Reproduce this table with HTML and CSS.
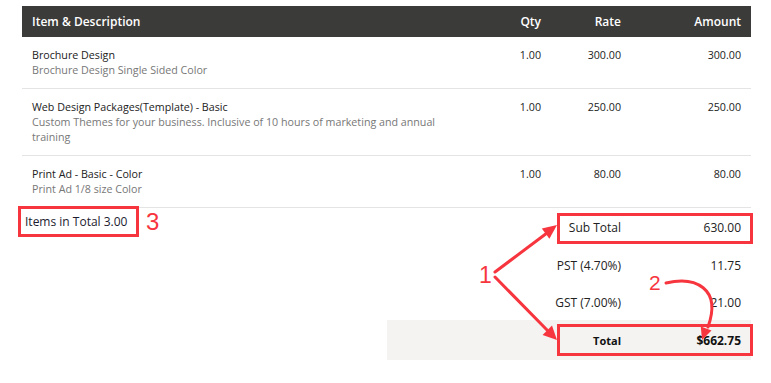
FILE: index.html
```html
<!DOCTYPE html>
<html lang="en">
<head>
<meta charset="utf-8">
<title>Invoice items</title>
<link rel="stylesheet" href="styles.css">
</head>
<body>
<div class="invoice">
  <div class="items">
    <div class="row head">
      <div class="cell item">Item &amp; Description</div>
      <div class="cell num">Qty</div>
      <div class="cell num">Rate</div>
      <div class="cell num amt">Amount</div>
    </div>
    <div class="row line">
      <div class="cell item">
        <div class="title">Brochure Design</div>
        <div class="desc">Brochure Design Single Sided Color</div>
      </div>
      <div class="cell num">1.00</div>
      <div class="cell num">300.00</div>
      <div class="cell num amt">300.00</div>
    </div>
    <div class="row line">
      <div class="cell item">
        <div class="title">Web Design Packages(Template) - Basic</div>
        <div class="desc">Custom Themes for your business. Inclusive of 10 hours of marketing and annual training</div>
      </div>
      <div class="cell num">1.00</div>
      <div class="cell num">250.00</div>
      <div class="cell num amt">250.00</div>
    </div>
    <div class="row line">
      <div class="cell item">
        <div class="title">Print Ad - Basic - Color</div>
        <div class="desc">Print Ad 1/8 size Color</div>
      </div>
      <div class="cell num">1.00</div>
      <div class="cell num">80.00</div>
      <div class="cell num amt">80.00</div>
    </div>
  </div>
  <div class="summary">
    <div class="count">Items in Total 3.00</div>
    <div class="totals">
      <div class="trow sub"><span class="label">Sub Total</span><span class="val">630.00</span></div>
      <div class="trow pst"><span class="label">PST (4.70%)</span><span class="val">11.75</span></div>
      <div class="trow gst"><span class="label">GST (7.00%)</span><span class="val">21.00</span></div>
      <div class="trow grand"><span class="label">Total</span><span class="val">$662.75</span></div>
    </div>
  </div>
  <svg class="marks" width="771" height="383" viewBox="0 0 771 383" aria-hidden="true">
    <g fill="none" stroke="#f7353e" stroke-width="3">
      <rect x="19.5" y="207.5" width="118" height="28"/>
      <rect x="558.5" y="214.5" width="193" height="28"/>
      <rect x="558.5" y="325.5" width="193" height="29"/>
      <path d="M495 272 L547 233" stroke-linecap="round"/>
      <path d="M495 277 L549 332" stroke-linecap="round"/>
      <path d="M666 283 C695 276 722 288 708 327" stroke-linecap="round"/>
    </g>
    <g fill="#f7353e">
      <polygon points="557,225 549.4,238.8 541.8,228.4"/>
      <polygon points="557,340 542.6,335 552,325.6"/>
      <polygon points="702,340 711.5,330.5 700.8,326.5"/>
    </g>
  </svg>
  <span class="mark m3">3</span>
  <span class="mark m1">1</span>
  <span class="mark m2">2</span>
</div>
</body>
</html>
```

FILE: styles.css
```css
html, body {
  margin: 0;
  padding: 0;
  background: #ffffff;
}

body {
  font-family: "Open Sans", "DejaVu Sans", sans-serif;
  color: #222222;
}

.invoice {
  position: relative;
  width: 729px;
  margin: 6px 0 0 22px;
}

.row {
  display: grid;
  grid-template-columns: 440px 79px 80px 130px;
}

.cell {
  box-sizing: border-box;
}

.cell.item {
  padding: 0 10px;
}

.cell.num {
  text-align: right;
}

.cell.amt {
  padding-right: 10px;
}

.head {
  height: 31px;
  align-items: center;
  background: #3b3b39;
  color: #ffffff;
  font-size: 12px;
  font-weight: 600;
}

.line {
  padding: 11px 0 10px;
  border-bottom: 1px solid #e4e4e4;
  font-size: 10.7px;
  line-height: 15px;
}

.title {
  color: #222222;
}

.desc {
  color: #777777;
}

.summary {
  display: flex;
  justify-content: space-between;
  align-items: flex-start;
}

.count {
  padding: 6px 0 0 3px;
  font-size: 12px;
  line-height: 15px;
  color: #1c1c30;
}

.totals {
  width: 364px;
  font-size: 12px;
}

.trow {
  display: grid;
  grid-template-columns: 234px 130px;
  align-items: center;
}

.trow .label {
  text-align: right;
}

.trow .val {
  text-align: right;
  padding-right: 10px;
}

.sub, .pst {
  height: 38px;
}

.gst {
  height: 36px;
}

.grand {
  height: 40px;
  background: #f4f3f1;
  font-size: 11px;
  font-weight: 700;
  color: #111111;
}

.grand .val {
  font-size: 12px;
}

.marks {
  position: absolute;
  left: -22px;
  top: -6px;
  pointer-events: none;
}

.mark {
  position: absolute;
  font-family: "Liberation Sans", Arial, sans-serif;
  color: #f7353e;
  line-height: 1;
}

.m3 {
  left: 124px;
  top: 204px;
  font-size: 24px;
}

.m1 {
  left: 457px;
  top: 258px;
  font-size: 23px;
}

.m2 {
  left: 627px;
  top: 266px;
  font-size: 21px;
}
```
